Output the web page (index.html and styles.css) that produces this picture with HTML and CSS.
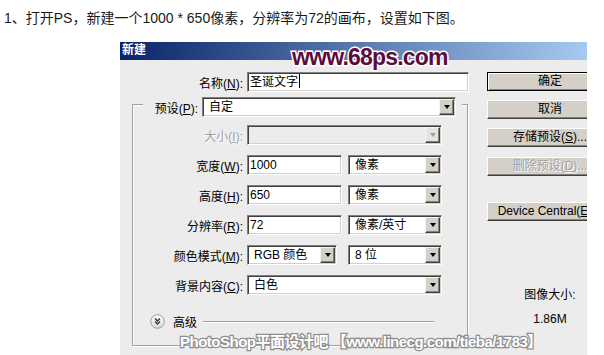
FILE: index.html
```html
<!DOCTYPE html>
<html lang="zh-CN">
<head>
    <meta charset="UTF-8">
    <title>新建</title>
    <link rel="stylesheet" href="styles.css">
</head>
<body>

    <p class="intro">1、打开PS，新建一个1000 * 650像素，分辨率为72的画布，设置如下图。</p>

    <div class="dialog">
        <div class="titlebar">新建</div>
        <div class="dialog-body">
            <div class="main">
                <div class="row">
                    <label class="lbl lbl-name">名称(<u>N</u>):</label>
                    <div class="field name-field">圣诞文字<span class="caret"></span></div>
                </div>

                <div class="group">
                    <div class="group-head">
                        <label class="lbl-preset">预设(<u>P</u>):</label>
                        <div class="select preset">自定<span class="arrow"></span></div>
                    </div>

                    <div class="rows">
                        <div class="row">
                            <label class="lbl disabled">大小(<u>I</u>):</label>
                            <div class="select wide off"><span class="arrow"></span></div>
                        </div>
                        <div class="row">
                            <label class="lbl">宽度(<u>W</u>):</label>
                            <div class="field num">1000</div>
                            <div class="select unit">像素<span class="arrow"></span></div>
                        </div>
                        <div class="row">
                            <label class="lbl">高度(<u>H</u>):</label>
                            <div class="field num">650</div>
                            <div class="select unit">像素<span class="arrow"></span></div>
                        </div>
                        <div class="row">
                            <label class="lbl">分辨率(<u>R</u>):</label>
                            <div class="field num">72</div>
                            <div class="select unit">像素/英寸<span class="arrow"></span></div>
                        </div>
                        <div class="row">
                            <label class="lbl">颜色模式(<u>M</u>):</label>
                            <div class="select mode">RGB 颜色<span class="arrow"></span></div>
                            <div class="select unit bits">8 位<span class="arrow"></span></div>
                        </div>
                        <div class="row">
                            <label class="lbl">背景内容(<u>C</u>):</label>
                            <div class="select wide">白色<span class="arrow"></span></div>
                        </div>
                    </div>

                    <div class="advanced">
                        <svg class="chevron" width="15" height="15" viewBox="0 0 15 15">
                            <defs>
                                <linearGradient id="knob" x1="0" y1="0" x2="0" y2="1">
                                    <stop offset="0" stop-color="#ffffff"/>
                                    <stop offset="1" stop-color="#d8d8d8"/>
                                </linearGradient>
                            </defs>
                            <circle cx="7.5" cy="7.5" r="6.8" fill="url(#knob)" stroke="#9a9a9a"/>
                            <path d="M5 4.5 L7.5 7 L10 4.5 M5 7.5 L7.5 10 L10 7.5" fill="none" stroke="#333" stroke-width="1.3"/>
                        </svg>
                        <span>高级</span>
                        <span class="rule"></span>
                    </div>
                </div>
            </div>

            <div class="side">
                <div class="btn btn-default">确定</div>
                <div class="btn">取消</div>
                <div class="btn">存储预设(<u>S</u>)...</div>
                <div class="btn btn-off">删除预设(<u>D</u>)...</div>
                <div class="btn btn-device">Device Central(<u>E</u>)...</div>
                <div class="info info-label">图像大小:</div>
                <div class="info info-size">1.86M</div>
            </div>
        </div>

        <div class="mark mark-top">www.68ps.com</div>
        <div class="mark mark-bottom">PhotoShop平面设计吧 【www.linecg.com/tieba/1783】</div>
    </div>

</body>
</html>
```

FILE: styles.css
```css
body {
    margin: 0;
    background: #fff;
    font-family: "Liberation Sans", "Noto Sans CJK SC", sans-serif;
    overflow: hidden;
}
.intro {
    margin: 8px 0 0 4px;
    font-size: 14px;
    line-height: 20px;
    color: #1a1a1a;
}
.dialog {
    position: relative;
    width: 467px;
    height: 330px;
    margin: 14px 0 0 120px;
    background: #ececec;
    overflow: hidden;
    color: #000;
}
.titlebar {
    height: 18px;
    padding-left: 2px;
    background: linear-gradient(to right, #0a246a, #a6caf0);
    color: #fff;
    font-size: 12px;
    font-weight: bold;
    line-height: 17px;
}
.dialog-body {
    display: flex;
    padding-top: 12px;
    font-size: 12px;
}
.main {
    width: 349px;
    flex-shrink: 0;
}
.row {
    display: flex;
    align-items: center;
    height: 20px;
}
.lbl {
    width: 110px;
    margin-right: 4px;
    text-align: right;
    white-space: nowrap;
}
.lbl-name {
    width: 123px;
}
.disabled {
    color: #a0a0a0;
    text-shadow: 1px 1px 0 #fff;
}

/* sunken edit boxes */
.field,
.select {
    box-sizing: border-box;
    height: 20px;
    background: #fff;
    border: 1px solid;
    border-color: #808080 #fff #fff #808080;
    box-shadow: inset 1px 1px 0 #404040, inset -1px -1px 0 #d4d0c8;
    line-height: 18px;
    white-space: nowrap;
}
.field {
    padding-left: 2px;
}
.name-field {
    width: 222px;
}
.caret {
    display: inline-block;
    width: 1px;
    height: 14px;
    margin-left: 1px;
    background: #000;
    vertical-align: -2px;
}
.num {
    width: 95px;
}
.select {
    display: flex;
    align-items: center;
    padding-left: 6px;
}
.arrow {
    display: flex;
    align-items: center;
    justify-content: center;
    box-sizing: border-box;
    width: 15px;
    height: 16px;
    margin-left: auto;
    margin-right: 1px;
    background: #d4d0c8;
    border: 1px solid;
    border-color: #f4f4f4 #404040 #404040 #f4f4f4;
    box-shadow: inset -1px -1px 0 #808080;
}
.arrow::after {
    content: "";
    border-left: 3px solid transparent;
    border-right: 3px solid transparent;
    border-top: 4px solid #000;
}
.wide {
    width: 195px;
}
.unit {
    width: 94px;
    margin-left: 6px;
}
.mode {
    width: 90px;
}
.bits {
    margin-left: 11px;
}
.off {
    background: #ececec;
}
.off .arrow {
    background: #e6e4df;
}
.off .arrow::after {
    border-top-color: #a0a0a0;
}

/* preset group box */
.group {
    box-sizing: border-box;
    width: 336px;
    margin: 12px 0 0 12px;
    padding-bottom: 15px;
    border: 1px solid #a0a0a0;
    box-shadow: inset 1px 1px 0 #fff, 1px 1px 0 #fff;
}
.group-head {
    display: flex;
    align-items: center;
    width: fit-content;
    height: 20px;
    margin: -8px 0 0 10px;
    padding: 0 6px 0 10px;
    background: #ececec;
}
.lbl-preset {
    width: 45px;
    margin-right: 4px;
    text-align: right;
    white-space: nowrap;
}
.preset {
    width: 254px;
}
.rows {
    display: flex;
    flex-direction: column;
    gap: 10px;
    margin-top: 8px;
}
.advanced {
    display: flex;
    align-items: center;
    height: 18px;
    margin: 17px 33px 0 17px;
}
.advanced span {
    margin-left: 8px;
}
.advanced .rule {
    flex: 1;
    height: 1px;
    margin-left: 6px;
    background: #a0a0a0;
    box-shadow: 0 1px 0 #fff;
}

/* buttons column */
.side {
    display: flex;
    flex-direction: column;
    flex-shrink: 0;
    width: 126px;
    margin-left: 18px;
}
.btn {
    box-sizing: border-box;
    height: 19px;
    margin-top: 9px;
    background: #d4d0c8;
    border: 1px solid;
    border-color: #fff #404040 #404040 #fff;
    box-shadow: inset -1px -1px 0 #808080;
    text-align: center;
    line-height: 17px;
    white-space: nowrap;
}
.btn:first-child {
    margin-top: 0;
}
.btn-default {
    border-color: #000;
    box-shadow: inset 1px 1px 0 #fff, inset -1px -1px 0 #808080;
}
.btn-off {
    margin-top: 10px;
    color: #a0a0a0;
    text-shadow: 1px 1px 0 #fff;
}
.btn-device {
    margin-top: 26px;
}
.info {
    text-align: center;
    line-height: 16px;
}
.info-label {
    margin-top: 66px;
}
.info-size {
    margin-top: 8px;
}

/* watermarks over the screenshot */
.mark {
    position: absolute;
    font-weight: bold;
    white-space: nowrap;
    paint-order: stroke fill;
}
.mark-top {
    left: 172px;
    top: 2px;
    font-size: 23px;
    letter-spacing: -0.8px;
    color: #5c0c3c;
    -webkit-text-stroke: 3px #fff;
}
.mark-bottom {
    left: 60px;
    top: 288px;
    font-size: 15px;
    letter-spacing: -0.5px;
    color: #fff;
    -webkit-text-stroke: 2.5px #8e8e8e;
}
```
